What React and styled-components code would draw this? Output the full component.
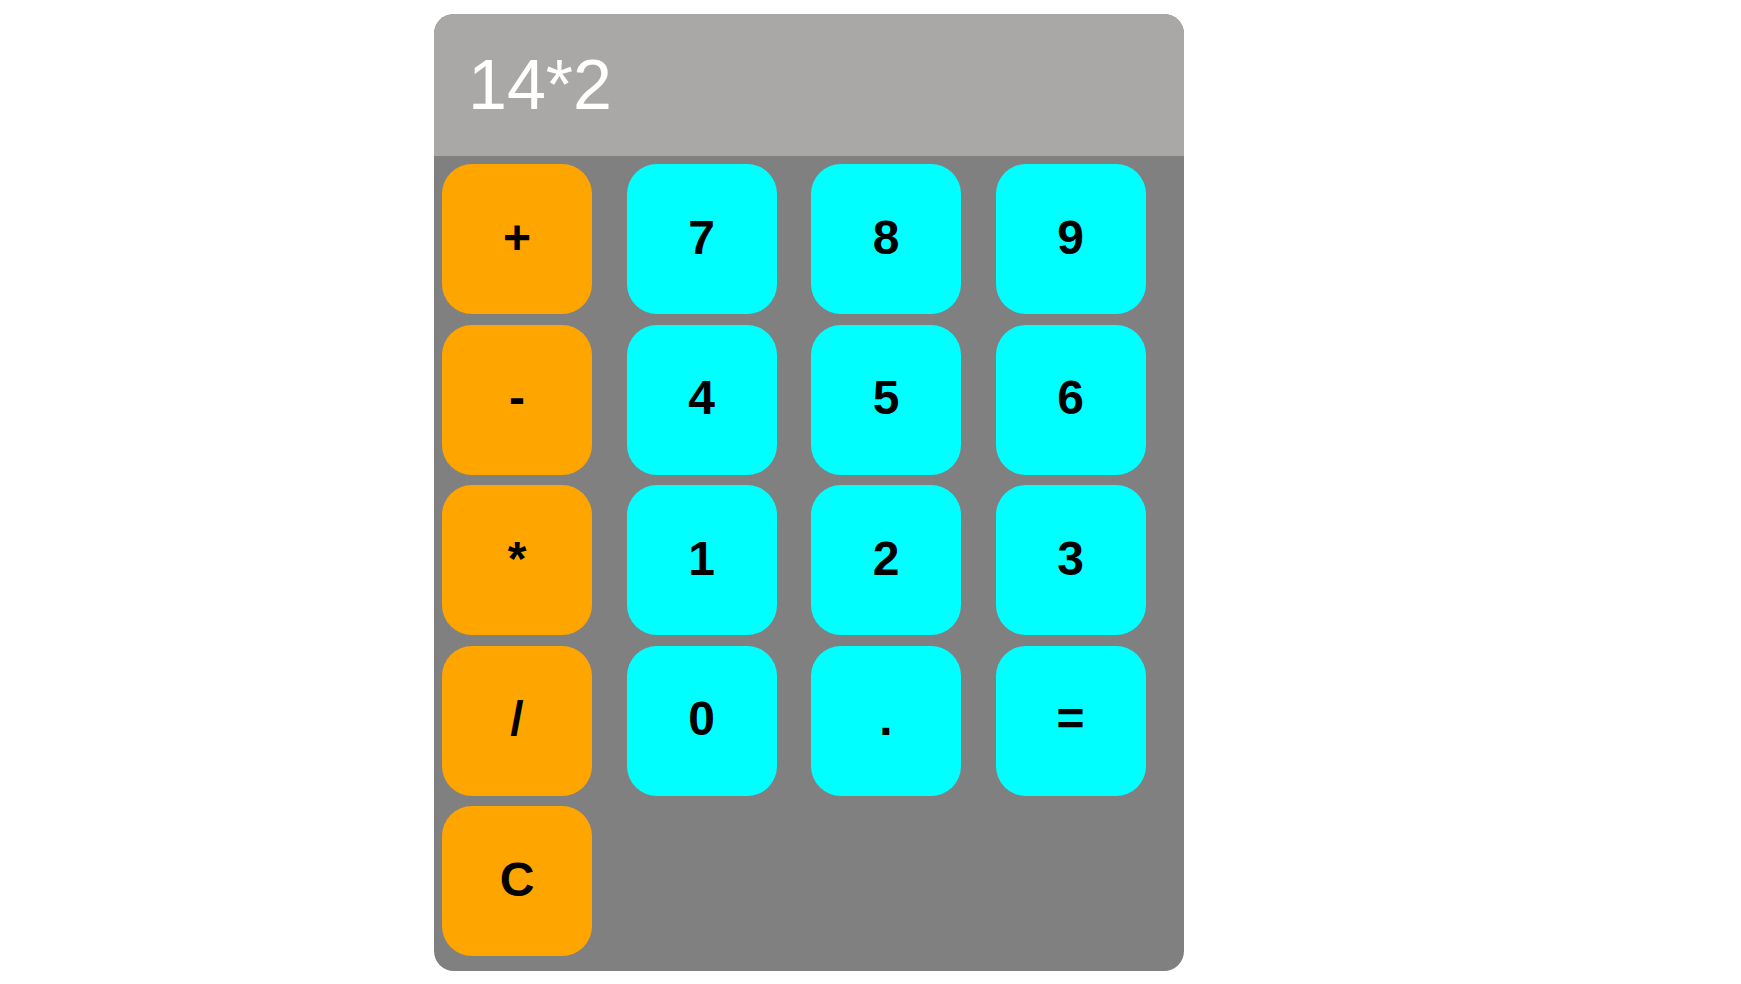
import React, { useState } from "react";
import styled, { createGlobalStyle } from "styled-components";

const GlobalStyle = createGlobalStyle`
  body {
    margin: 0;
    background: #ffffff;
    font-family: "Liberation Sans", Arial, sans-serif;
  }
`;

const Calc = styled.div`
  width: 750px;
  margin: 14px 0 0 434px;
  background: #808080;
  border-radius: 20px;
  overflow: hidden;
`;

const Display = styled.div`
  height: 142px;
  box-sizing: border-box;
  padding: 31px 34px 0;
  background: #a9a8a6;
  color: #ffffff;
  font-size: 70px;
  line-height: normal;
`;

const Keys = styled.div`
  display: grid;
  grid-template-columns: repeat(4, 150px);
  grid-auto-rows: 150px;
  column-gap: 34.5px;
  row-gap: 10.5px;
  padding: 8px 0 15px 8px;
`;

const Key = styled.button`
  border: none;
  border-radius: 30px;
  background: ${(p) => (p.$op ? "#ffa500" : "#00ffff")};
  color: #000000;
  font-family: "Liberation Sans", Arial, sans-serif;
  font-weight: bold;
  font-size: 48px;
  padding: 0 0 4px;
  cursor: pointer;
`;

const rows = [
  ["+", "7", "8", "9"],
  ["-", "4", "5", "6"],
  ["*", "1", "2", "3"],
  ["/", "0", ".", "="],
  ["C"],
];

const App = () => {
  const [expr, setexpr] = useState("14*2");

  const press = (k) => {
    if (k === "C") return setexpr("");
    if (k === "=") {
      try {
        // eslint-disable-next-line no-new-func
        setexpr(String(Function(`return (${expr})`)()));
      } catch (e) {
        setexpr("Error");
      }
      return;
    }
    setexpr(expr + k);
  };

  return (
    <>
      <GlobalStyle />
      <Calc>
        <Display>{expr}</Display>
        <Keys>
          {rows.flat().map((k, i) => (
            <Key key={k} $op={i % 4 === 0} onClick={() => press(k)}>
              {k}
            </Key>
          ))}
        </Keys>
      </Calc>
    </>
  );
};

export default App;
